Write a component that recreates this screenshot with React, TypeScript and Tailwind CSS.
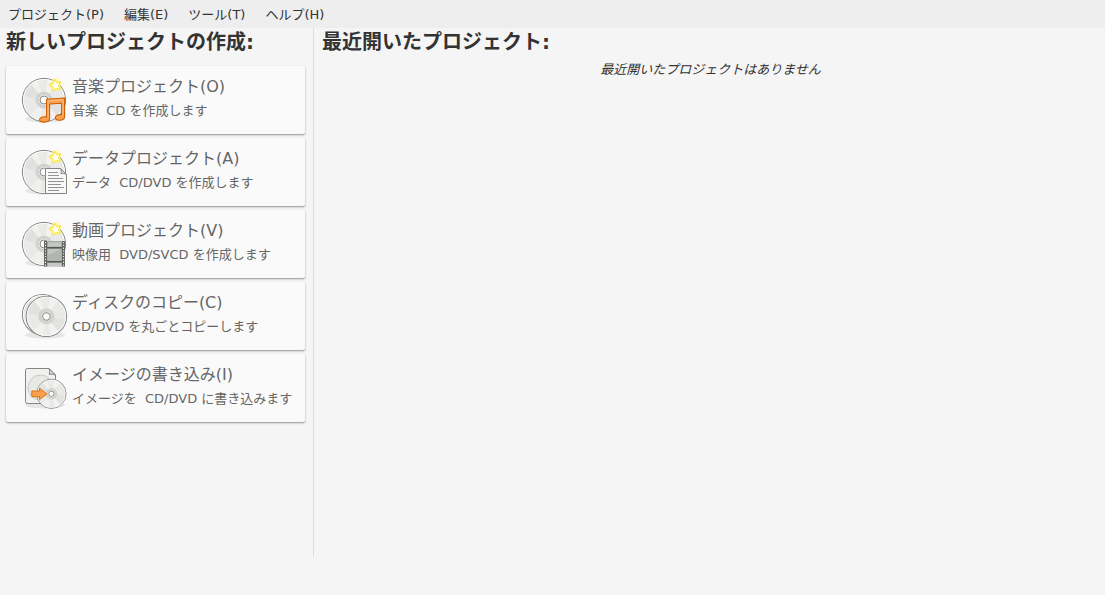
import type { ReactNode } from "react";

function Disc({ cx = 24, cy = 24, r = 21.6 }: { cx?: number; cy?: number; r?: number }) {
  const k = r / 21.6;
  return (
    <g transform={`translate(${cx} ${cy}) scale(${k})`}>
      <circle r="21.6" fill="#e9e9e7" stroke="#868784" strokeWidth={1 / k} />
      <path d="M0 0L-20.5-4A21 21 0 0 1-13-16.5Z" fill="#e1e1df" />
      <path d="M0 0L-13-16.5A21 21 0 0 1-7-19.8Z" fill="#f1f1f0" />
      <path d="M0 0L4-20.6A21 21 0 0 1 12-17.2Z" fill="#f2f2f1" />
      <path d="M0 0L20.5 4A21 21 0 0 1 13 16.5Z" fill="#e2e2e0" />
      <path d="M0 0L13 16.5A21 21 0 0 1 5 20.4Z" fill="#f2f2f1" />
      <path d="M0 0L-4 20.6A21 21 0 0 1-14 15.6Z" fill="#f0f0ef" />
      <circle r="20.5" fill="none" stroke="#fafafa" strokeWidth="1" />
      <circle r="8.6" fill="#cfcfce" fillOpacity=".9" />
      <circle r="5" fill="#f2f2f1" />
      <circle r="4" fill="#fafafa" stroke="#8b8c89" strokeWidth={1 / k} />
    </g>
  );
}

function Star() {
  return (
    <g strokeLinejoin="round">
      <circle cx="35.6" cy="8.4" r="6.2" fill="#fff27a" fillOpacity=".4" />
      <path
        d="M34.6 3l2 3.5 4-.5-2 3.5 1.8 3.8-4-.9-3.2 2.7-.4-4.2-3.5-2.1 3.9-1.6z"
        fill="#fffff4"
        stroke="#fdea4c"
        strokeWidth="1.4"
      />
    </g>
  );
}

function Shadow() {
  return <ellipse cx="25" cy="43" rx="20" ry="3.5" fill="#000" fillOpacity=".08" />;
}

function Icon({ children }: { children: ReactNode }) {
  return (
    <svg className="size-12 shrink-0" viewBox="0 0 48 48" fill="none" aria-hidden="true">
      {children}
    </svg>
  );
}

const audioIcon = (
  <Icon>
    <Shadow />
    <Disc />
    <Star />
    <path
      d="M26.6 23.3L44.6 22v18.4c0 2.6-2.8 3.8-5.4 3.8-2.4 0-3.8-1-3.8-2.5 0-2.1 2.6-3.4 6.2-3V27.2l-12 .8v14.6c0 2.4-2.8 3.5-5.8 3.5-2.6 0-4.2-.9-4.2-2.4 0-2.1 3-3.4 7-2.8z"
      fill="#f9a04e"
      stroke="#ce5c00"
      strokeWidth="1.1"
      strokeLinejoin="round"
    />
    <path d="M28.1 41.5V24.8l14.8-1.1v16" stroke="#fcc48c" strokeWidth=".9" />
  </Icon>
);

const dataIcon = (
  <Icon>
    <Shadow />
    <Disc />
    <Star />
    <path d="M25.5 20.5h15l6 6v19h-21z" fill="#f8f8f8" stroke="#858683" />
    <path d="M40.5 20.5c1 2 .8 4 .4 5.2 1.8-.4 4-.1 5.6.8z" fill="#dededc" stroke="#858683" />
    <path
      d="M28 24.5h10M28 27.5h11M28 30.5h15M28 33.5h16M28 36.5h13M28 39.5h16M28 42.5h11"
      stroke="#93948f"
    />
  </Icon>
);

const videoIcon = (
  <Icon>
    <Shadow />
    <Disc />
    <Star />
    <rect x="24" y="21" width="21" height="25.5" fill="#a4a7a2" fillOpacity=".9" />
    <path d="M28 22.5h13v4H28zM28 29h13v12H28zM28 43h13v3H28z" fill="#c4c7c2" />
    <path d="M28 35l13-6v12H28z" fill="#b1b5af" />
    <path d="M25.5 21v25.5M43.5 21v25.5" stroke="#60625e" strokeWidth="3" />
    <path d="M27 27.7h15M27 41.7h15" stroke="#555753" strokeWidth="1.5" />
    <path d="M25.5 22v24M43.5 22v24" stroke="#e6e6e4" strokeWidth="1.2" strokeDasharray="1.3 1.5" />
  </Icon>
);

const copyIcon = (
  <Icon>
    <Shadow />
    <Disc cx={22.6} cy={22.6} r={20.2} />
    <Disc cx={26.4} cy={24.4} r={20.2} />
  </Icon>
);

const imageIcon = (
  <Icon>
    <ellipse cx="25" cy="41" rx="20" ry="3.5" fill="#000" fillOpacity=".08" />
    <path
      d="M7.5 4.5h21.5l6.5 6.5v26.5a2 2 0 0 1-2 2h-26a2 2 0 0 1-2-2v-31a2 2 0 0 1 2-2z"
      fill="#f1f1f0"
      stroke="#858683"
    />
    <circle cx="20.5" cy="23.5" r="12.5" fill="#e8e8e7" stroke="#c9c9c7" />
    <path d="M29 4.5c.8 2 .7 4.2.2 5.8 2-.3 4.5-.1 6.3.9z" fill="#dcdcda" stroke="#858683" />
    <Disc cx={31.4} cy={29.8} r={14.6} />
    <path
      d="M11.8 27h7.7v-2.8l7.4 5.8-7.4 5.6v-2.9h-7.7z"
      fill="#f9a04e"
      stroke="#d9730f"
      strokeLinejoin="round"
    />
  </Icon>
);

const menus = ["プロジェクト(P)", "編集(E)", "ツール(T)", "ヘルプ(H)"];

const projects = [
  { icon: audioIcon, title: "音楽プロジェクト(O)", text: "音楽  CD を作成します" },
  { icon: dataIcon, title: "データプロジェクト(A)", text: "データ  CD/DVD を作成します" },
  { icon: videoIcon, title: "動画プロジェクト(V)", text: "映像用  DVD/SVCD を作成します" },
  { icon: copyIcon, title: "ディスクのコピー(C)", text: "CD/DVD を丸ごとコピーします" },
  { icon: imageIcon, title: "イメージの書き込み(I)", text: "イメージを  CD/DVD に書き込みます" },
];

export default function App() {
  return (
    <div className="flex min-h-screen flex-col bg-[#f5f5f5] pb-[38px] font-['DejaVu_Sans','Noto_Sans_CJK_JP',sans-serif] text-[13px] leading-5 text-[#333333]">
      <nav className="flex h-7 gap-1 bg-[#eeeeee] pt-0.5">
        {menus.map((label) => (
          <button key={label} type="button" className="px-2">
            {label}
          </button>
        ))}
      </nav>
      <main className="flex flex-1">
        <section className="flex shrink-0 flex-col border-r border-[#dcdcdc] pr-2 pl-1.5">
          <h2 className="text-xl leading-7 font-bold">新しいプロジェクトの作成:</h2>
          <div className="mt-2.5 flex flex-col gap-1">
            {projects.map((p) => (
              <button
                key={p.title}
                type="button"
                className="flex h-17 min-w-[299px] items-center gap-1 rounded-xs bg-[#fafafa] pr-3 pl-3.5 text-left text-[#666666] shadow-[0_1px_2px_rgba(0,0,0,0.4)]"
              >
                {p.icon}
                <span className="flex flex-col pb-1.5">
                  <span className="text-base leading-7">{p.title}</span>
                  <span className="whitespace-pre">{p.text}</span>
                </span>
              </button>
            ))}
          </div>
        </section>
        <section className="flex-1 pr-1.5 pl-2">
          <h2 className="text-xl leading-7 font-bold">最近開いたプロジェクト:</h2>
          <p className="mt-1 text-center italic">最近開いたプロジェクトはありません</p>
        </section>
      </main>
    </div>
  );
}
